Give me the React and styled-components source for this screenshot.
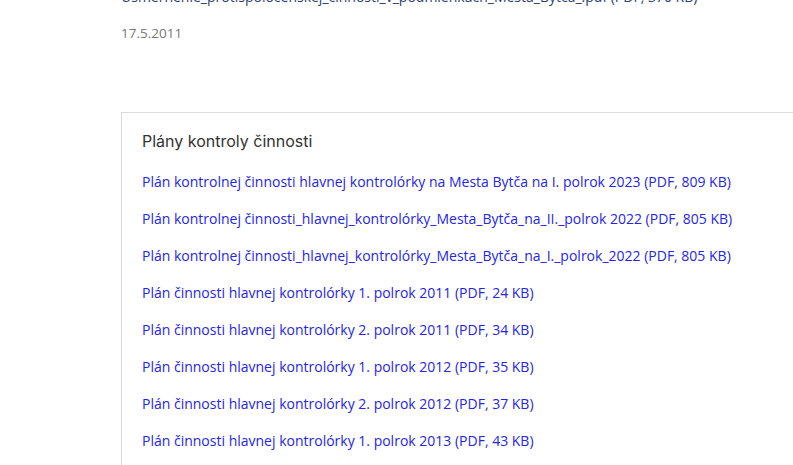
import React from 'react'
import styled, { createGlobalStyle } from 'styled-components'

const GlobalStyle = createGlobalStyle`
  html, body {
    margin: 0;
    padding: 0;
    background: #fff;
    overflow: hidden;
  }
  body {
    font-family: "Open Sans", "Liberation Sans", sans-serif;
  }
`

const Page = styled.div`
  padding-left: 121px;
  margin-top: -13px;
`

const FileItem = styled.div`
  display: flex;
  flex-direction: column;
  gap: 18px;
`

const TopLink = styled.a`
  font-size: 14px;
  line-height: 19px;
  color: #2c3e72;
  text-decoration: none;
`

const Date = styled.div`
  font-size: 13.5px;
  line-height: 19px;
  color: #777;
`

const Box = styled.section`
  margin-top: 69px;
  width: 800px;
  border: 1px solid #dcdcdc;
  padding: 17px 20px 10px;
  box-sizing: border-box;
`

const Title = styled.h3`
  margin: 0 0 20px;
  font-family: Inter, Roboto, sans-serif;
  font-weight: 400;
  font-size: 16px;
  line-height: 22px;
  color: #333;
`

const List = styled.ul`
  list-style: none;
  margin: 0;
  padding: 0;
  display: flex;
  flex-direction: column;
  gap: 18px;
`

const Item = styled.li`
  display: block;
  line-height: 19px;
`

const Link = styled.a`
  font-size: 14px;
  line-height: 19px;
  color: #2525e8;
  text-decoration: none;
`

const links = [
  'Plán kontrolnej činnosti hlavnej kontrolórky na Mesta Bytča na I. polrok 2023 (PDF, 809 KB)',
  'Plán kontrolnej činnosti_hlavnej_kontrolórky_Mesta_Bytča_na_II._polrok 2022 (PDF, 805 KB)',
  'Plán kontrolnej činnosti_hlavnej_kontrolórky_Mesta_Bytča_na_I._polrok_2022 (PDF, 805 KB)',
  'Plán činnosti hlavnej kontrolórky 1. polrok 2011 (PDF, 24 KB)',
  'Plán činnosti hlavnej kontrolórky 2. polrok 2011 (PDF, 34 KB)',
  'Plán činnosti hlavnej kontrolórky 1. polrok 2012 (PDF, 35 KB)',
  'Plán činnosti hlavnej kontrolórky 2. polrok 2012 (PDF, 37 KB)',
  'Plán činnosti hlavnej kontrolórky 1. polrok 2013 (PDF, 43 KB)',
  'Plán činnosti hlavnej kontrolórky 2. polrok 2013 (PDF, 41 KB)',
]

export default function App() {
  return (
    <>
      <GlobalStyle />
      <Page>
        <FileItem>
          <TopLink href="#">
            Usmernenie_protispoločenskej_činnosti_v_podmienkach_Mesta_Bytča_.pdf (PDF, 370 KB)
          </TopLink>
          <Date>17.5.2011</Date>
        </FileItem>
        <Box>
          <Title>Plány kontroly činnosti</Title>
          <List>
            {links.map((text) => (
              <Item key={text}>
                <Link href="#">{text}</Link>
              </Item>
            ))}
          </List>
        </Box>
      </Page>
    </>
  )
}
